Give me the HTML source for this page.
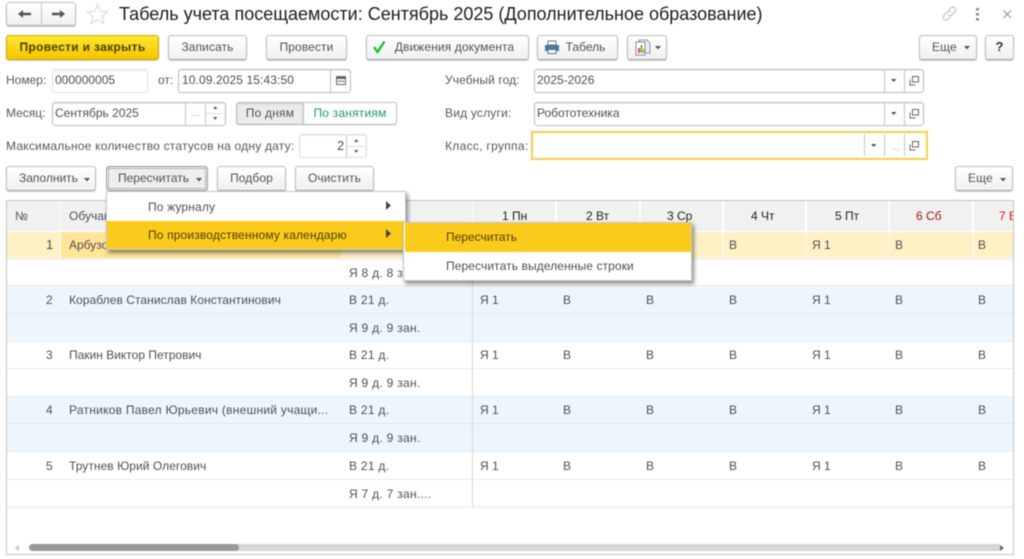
<!DOCTYPE html>
<html lang="ru"><head><meta charset="utf-8"><title>Табель</title>
<style>
html,body{margin:0;padding:0;background:#fff}
#p{position:relative;width:1024px;height:559px;overflow:hidden;background:#fff;font:12px "Liberation Sans",sans-serif;color:#4f4f4f;filter:blur(.4px)}
#p div,#p span.t,#p svg{position:absolute}
.t{white-space:nowrap;line-height:14px}
.b{box-sizing:border-box;height:25px;border:1px solid #bcbcbc;border-bottom-color:#a8a8a8;border-radius:3px;background:linear-gradient(#fff,#f0f0f0);box-shadow:0 1px 1px #ccc;text-align:center;line-height:22px;color:#525252;letter-spacing:.1px}
.i{box-sizing:border-box;height:24px;border:1px solid #c4c4c4;border-radius:3px;background:#fff;box-shadow:inset 0 1px 1px #eee}
.v{width:1px;background:#c4c4c4}
.l{color:#585858}
.s{letter-spacing:.28px}
</style></head><body><div id="p">

<!-- nav -->
<div class="b" style="left:6px;top:2px;width:70px;height:24px"></div>
<div class="v" style="left:41px;top:3px;height:21px"></div>
<svg style="left:17px;top:8px" width="15" height="12"><path d="M1 6L6 2V4.700H14V7.300H6V10Z" fill="#555"/></svg>
<svg style="left:51px;top:8px" width="15" height="12"><path d="M14 6L9 2V4.700H1V7.300H9V10Z" fill="#555"/></svg>
<svg style="left:86px;top:3px" width="23" height="22"><path d="M11.500 1.500L14.300 8.300L21.500 8.800L16 13.500L17.800 20.500L11.500 16.700L5.200 20.500L7 13.500L1.500 8.800L8.700 8.300Z" fill="#fff" stroke="#dcdcdc" stroke-width="1.200"/></svg>
<span class="t" style="left:119px;top:4px;font-size:18px;line-height:21px;color:#1c1c1c">Табель учета посещаемости: Сентябрь 2025 (Дополнительное образование)</span>
<svg style="left:941px;top:5px" width="17" height="17"><path d="M7.500 5L10 2.500Q12 1 14 2.800Q15.500 5 14 6.800L10.500 10.300Q8.500 11.500 7 10M9.500 12L7 14.500Q5 16 3 14.200Q1.500 12 3 10.200L6.500 6.700Q8.500 5.500 10 7" fill="none" stroke="#b8b8b8" stroke-width="1"/></svg>
<svg style="left:975px;top:6px" width="6" height="16"><path d="M1 2h3v2.500H1zM1 7h3v2.500H1zM1 12h3v2.500H1z" fill="#8a8a8a"/></svg>
<svg style="left:1002px;top:9px" width="11" height="11"><path d="M1.500 1.500L9 9M9 1.500L1.500 9" stroke="#999" stroke-width="1.200" fill="none"/></svg>

<!-- command bar -->
<div class="b" style="left:6px;top:35px;width:153px;border-color:#c8a800;background:linear-gradient(#ffe92e,#f5c400);color:#4a3f00;font-weight:bold;font-size:12px;letter-spacing:.32px">Провести и закрыть</div>
<div class="b" style="left:168px;top:35px;width:79px">Записать</div>
<div class="b" style="left:266px;top:35px;width:81px">Провести</div>
<div class="b" style="left:366px;top:35px;width:163px;padding-left:14px">Движения документа</div>
<svg style="left:372px;top:40px" width="15" height="14"><path d="M2 7L5.500 12L12.500 1.500" fill="none" stroke="#0fbf2f" stroke-width="2.200"/></svg>
<div class="b" style="left:537px;top:35px;width:81px;padding-left:16px;letter-spacing:0">Табель</div>
<svg style="left:544px;top:40px" width="16" height="15"><path d="M4 1h8v4H4z" fill="#fff" stroke="#5a7fa0"/><path d="M1 5h14v6h-2.500v3h-9v-3H1z" fill="#4e7696"/><path d="M4.500 10h7v3h-7z" fill="#fff"/></svg>
<div class="b" style="left:627px;top:35px;width:40px"></div>
<svg style="left:634px;top:39px" width="19" height="17"><path d="M5 1h8l3 3v10H5z" fill="#eee" stroke="#8a9aa5"/><path d="M2 3h9v13H2z" fill="#fff" stroke="#7f8f9a"/><path d="M4 9h2v5H4z" fill="#d9534f"/><path d="M6.500 6h2v8h-2z" fill="#7cb342"/><path d="M9 10h1.500v4H9z" fill="#e0a030"/></svg>
<svg style="left:655px;top:46px" width="7" height="4"><path d="M0 0h6L3 3.500z" fill="#555"/></svg>
<div class="b" style="left:919px;top:35px;width:58px;text-align:left;padding-left:12px">Еще</div>
<svg style="left:964px;top:46px" width="7" height="4"><path d="M0 0h6L3 3.500z" fill="#555"/></svg>
<div class="b" style="left:985px;top:35px;width:29px;font-weight:bold;color:#333;font-size:13px">?</div>

<!-- row 1 -->
<span class="t l" style="left:6px;top:73px">Номер:</span>
<div class="i" style="left:52px;top:69px;width:96px;border-color:#e0e0e0"></div>
<span class="t" style="left:55px;top:73px">000000005</span>
<span class="t l" style="left:158px;top:73px">от:</span>
<div class="i" style="left:178px;top:69px;width:173px;border-color:#bbb"></div>
<span class="t" style="left:182px;top:73px;letter-spacing:.1px">10.09.2025 15:43:50</span>
<div class="v" style="left:330px;top:70px;height:22px"></div>
<svg style="left:335px;top:74px" width="12" height="12"><path d="M1.500 2.500h9v8h-9z" fill="#fff" stroke="#666"/><path d="M1.500 2.500h9v2.500h-9zM3 6.500h1.500V8H3zM5.300 6.500h1.500V8H5.300zM7.600 6.500h1.500V8H7.600z" fill="#666"/></svg>

<span class="t l" style="left:445px;top:73px;letter-spacing:.1px">Учебный год:</span>
<div class="i" style="left:534px;top:69px;width:390px;border-color:#bbb"></div>
<span class="t" style="left:537px;top:73px">2025-2026</span>
<div class="v" style="left:884px;top:70px;height:22px"></div>
<div class="v" style="left:904px;top:70px;height:22px"></div>
<svg style="left:891px;top:79px" width="6" height="4"><path d="M0 0h5.500L2.700 3z" fill="#555"/></svg>
<svg style="left:909px;top:75px" width="11" height="11"><path d="M3.500 1.500h6v5.500h-6z" fill="#fff" stroke="#666"/><path d="M1 4.500v5.500h5.500" fill="none" stroke="#666"/></svg>

<!-- row 2 -->
<span class="t l" style="left:6px;top:106px">Месяц:</span>
<div class="i" style="left:52px;top:102px;width:174px;border-color:#bbb"></div>
<span class="t" style="left:55px;top:106px">Сентябрь 2025</span>
<div class="v" style="left:185px;top:103px;height:22px"></div>
<div class="v" style="left:205px;top:103px;height:22px"></div>
<div style="left:206px;top:113px;width:19px;height:1px;background:#ddd"></div>
<span class="t" style="left:191px;top:106px;color:#aaa;font-size:11px">...</span>
<svg style="left:213px;top:106px" width="5" height="4"><path d="M0 3h4.500L2.200 0z" fill="#666"/></svg>
<svg style="left:213px;top:117px" width="5" height="4"><path d="M0 0h4.500L2.200 3z" fill="#666"/></svg>
<div class="b" style="left:236px;top:102px;width:68px;height:23px;background:#ececec;line-height:21px;border-radius:3px 0 0 3px;box-shadow:inset 0 1px 2px #ccc;letter-spacing:.2px">По дням</div>
<div class="b" style="left:303px;top:102px;width:94px;height:23px;background:#fff;line-height:21px;color:#1f9a5a;border-radius:0 3px 3px 0;box-shadow:none;letter-spacing:.2px">По занятиям</div>

<span class="t l" style="left:445px;top:106px;letter-spacing:.2px">Вид услуги:</span>
<div class="i" style="left:534px;top:102px;width:390px;border-color:#bbb"></div>
<span class="t" style="left:537px;top:106px">Робототехника</span>
<div class="v" style="left:884px;top:103px;height:22px"></div>
<div class="v" style="left:904px;top:103px;height:22px"></div>
<svg style="left:891px;top:112px" width="6" height="4"><path d="M0 0h5.500L2.700 3z" fill="#555"/></svg>
<svg style="left:909px;top:108px" width="11" height="11"><path d="M3.500 1.500h6v5.500h-6z" fill="#fff" stroke="#666"/><path d="M1 4.500v5.500h5.500" fill="none" stroke="#666"/></svg>

<!-- row 3 -->
<span class="t l" style="left:6px;top:139px;letter-spacing:.21px">Максимальное количество статусов на одну дату:</span>
<div class="i" style="left:299px;top:134px;width:68px;border-color:#ddd"></div>
<span class="t" style="left:337px;top:139px;font-size:13px">2</span>
<div class="v" style="left:346px;top:135px;height:22px"></div>
<div style="left:347px;top:146px;width:19px;height:1px;background:#ddd"></div>
<svg style="left:354px;top:139px" width="5" height="4"><path d="M0 3h4.500L2.200 0z" fill="#666"/></svg>
<svg style="left:354px;top:150px" width="5" height="4"><path d="M0 0h4.500L2.200 3z" fill="#666"/></svg>

<span class="t l" style="left:445px;top:139px;letter-spacing:.3px">Класс, группа:</span>
<div style="box-sizing:border-box;left:531px;top:131px;width:397px;height:29px;border:2px solid #f7cd4a;background:#fff"></div>
<div class="v" style="left:864px;top:134px;height:22px"></div>
<div class="v" style="left:884px;top:134px;height:22px"></div>
<div class="v" style="left:904px;top:134px;height:22px"></div>
<svg style="left:871px;top:144px" width="6" height="4"><path d="M0 0h5.500L2.700 3z" fill="#555"/></svg>
<span class="t" style="left:891px;top:140px;color:#aaa;font-size:11px">...</span>
<svg style="left:909px;top:140px" width="11" height="11"><path d="M3.500 1.500h6v5.500h-6z" fill="#fff" stroke="#666"/><path d="M1 4.500v5.500h5.500" fill="none" stroke="#666"/></svg>

<!-- table command bar -->
<div class="b" style="left:6px;top:166px;width:90px;text-align:left;padding-left:12px;letter-spacing:0">Заполнить</div>
<svg style="left:84px;top:178px" width="7" height="4"><path d="M0 0h6L3 3.500z" fill="#555"/></svg>
<div class="b" style="left:106px;top:166px;width:102px;text-align:left;padding-left:11px;background:#eee;border-color:#999;box-shadow:none;letter-spacing:0">Пересчитать</div>
<div style="box-sizing:border-box;left:108px;top:168px;width:98px;height:21px;border:1px dotted #777"></div>
<svg style="left:196px;top:178px" width="7" height="4"><path d="M0 0h6L3 3.500z" fill="#555"/></svg>
<div class="b" style="left:217px;top:166px;width:69px">Подбор</div>
<div class="b" style="left:295px;top:166px;width:79px">Очистить</div>
<div class="b" style="left:955px;top:166px;width:58px;text-align:left;padding-left:12px">Еще</div>
<svg style="left:1000px;top:178px" width="7" height="4"><path d="M0 0h6L3 3.500z" fill="#555"/></svg>

<!-- table frame -->
<div style="box-sizing:border-box;left:6px;top:200px;width:1008px;height:355px;border:1px solid #c4c4c4;background:#fff"></div>
<div style="left:7px;top:201px;width:1006px;height:30px;background:#f1f1f1"></div>
<div style="left:60px;top:201px;width:1px;height:30px;background:#fff"></div>
<div style="left:472px;top:201px;width:1px;height:30px;background:#fff"></div>
<div style="left:555px;top:201px;width:2px;height:30px;background:#fff"></div>
<div style="left:639px;top:201px;width:2px;height:30px;background:#fff"></div>
<div style="left:722px;top:201px;width:2px;height:30px;background:#fff"></div>
<div style="left:805px;top:201px;width:2px;height:30px;background:#fff"></div>
<div style="left:888px;top:201px;width:2px;height:30px;background:#fff"></div>
<div style="left:972px;top:201px;width:2px;height:30px;background:#fff"></div>
<span class="t" style="left:15px;top:209px">№</span>
<span class="t" style="left:69px;top:209px">Обучающийся</span>
<span class="t" style="left:502px;top:209px;color:#222">1 Пн</span>
<span class="t" style="left:586px;top:209px;color:#222">2 Вт</span>
<span class="t" style="left:667px;top:209px;color:#222">3 Ср</span>
<span class="t" style="left:751px;top:209px;color:#222">4 Чт</span>
<span class="t" style="left:835px;top:209px;color:#222">5 Пт</span>
<span class="t" style="left:916px;top:209px;color:#a01818">6 Сб</span>
<span class="t" style="left:999px;top:209px;color:#e01010">7 Вс</span>
<div style="left:1013px;top:200px;width:11px;height:32px;background:#fff"></div>
<div style="left:1013px;top:200px;width:1px;height:355px;background:#c4c4c4"></div>

<!-- row backgrounds -->
<div style="left:7px;top:232px;width:1006px;height:26px;background:#fff1c6"></div>
<div style="left:61px;top:232px;width:280px;height:26px;background:#ffe49a"></div>
<div style="left:60px;top:232px;width:1px;height:26px;background:#fff"></div>
<div style="left:7px;top:258px;width:1006px;height:2px;background:#f2f2f2"></div>
<div style="left:7px;top:286px;width:1006px;height:55px;background:#edf6fd"></div>
<div style="left:7px;top:396px;width:1006px;height:55px;background:#edf6fd"></div>
<div style="left:7px;top:285px;width:1006px;height:1px;background:#e4ebf0"></div>
<div style="left:7px;top:313px;width:1006px;height:1px;background:#e2e8ec"></div>
<div style="left:7px;top:341px;width:1006px;height:1px;background:#e6ebef"></div>
<div style="left:7px;top:368px;width:1006px;height:1px;background:#e8e8e8"></div>
<div style="left:7px;top:396px;width:1006px;height:1px;background:#e4ebf0"></div>
<div style="left:7px;top:423px;width:1006px;height:1px;background:#e2e8ec"></div>
<div style="left:7px;top:451px;width:1006px;height:1px;background:#e4ebf0"></div>
<div style="left:7px;top:479px;width:1006px;height:1px;background:#e8e8e8"></div>
<div style="left:7px;top:506px;width:1006px;height:2px;background:#f0f0f0"></div>
<div style="left:472px;top:258px;width:1px;height:249px;background:#d8d8d8"></div>
<div style="left:555px;top:232px;width:2px;height:26px;background:#fff7dd"></div>
<div style="left:639px;top:232px;width:2px;height:26px;background:#fff7dd"></div>
<div style="left:722px;top:232px;width:2px;height:26px;background:#fff7dd"></div>
<div style="left:805px;top:232px;width:2px;height:26px;background:#fff7dd"></div>
<div style="left:888px;top:232px;width:2px;height:26px;background:#fff7dd"></div>
<div style="left:972px;top:232px;width:2px;height:26px;background:#fff7dd"></div>

<!-- row text -->
<span class="t" style="left:46px;top:238px;font-size:13px">1</span>
<span class="t" style="left:69px;top:238px">Арбузов</span>
<span class="t s" style="left:349px;top:266px">Я 8 д. 8 зан.</span>
<span class="t" style="left:729px;top:238px">В</span><span class="t" style="left:812px;top:238px">Я 1</span><span class="t" style="left:895px;top:238px">В</span><span class="t" style="left:978px;top:238px">В</span>

<span class="t" style="left:46px;top:293px">2</span>
<span class="t" style="left:69px;top:293px;letter-spacing:.06px">Кораблев Станислав Константинович</span>
<span class="t s" style="left:349px;top:293px">В 21 д.</span>
<span class="t s" style="left:349px;top:321px">Я 9 д. 9 зан.</span>
<span class="t" style="left:480px;top:293px">Я 1</span><span class="t" style="left:563px;top:293px">В</span><span class="t" style="left:646px;top:293px">В</span><span class="t" style="left:729px;top:293px">В</span><span class="t" style="left:812px;top:293px">Я 1</span><span class="t" style="left:895px;top:293px">В</span><span class="t" style="left:978px;top:293px">В</span>

<span class="t" style="left:46px;top:348px">3</span>
<span class="t" style="left:69px;top:348px">Пакин Виктор Петрович</span>
<span class="t s" style="left:349px;top:348px">В 21 д.</span>
<span class="t s" style="left:349px;top:376px">Я 9 д. 9 зан.</span>
<span class="t" style="left:480px;top:348px">Я 1</span><span class="t" style="left:563px;top:348px">В</span><span class="t" style="left:646px;top:348px">В</span><span class="t" style="left:729px;top:348px">В</span><span class="t" style="left:812px;top:348px">Я 1</span><span class="t" style="left:895px;top:348px">В</span><span class="t" style="left:978px;top:348px">В</span>

<span class="t" style="left:46px;top:403px">4</span>
<span class="t" style="left:69px;top:403px;letter-spacing:.25px">Ратников Павел Юрьевич (внешний учащи...</span>
<span class="t s" style="left:349px;top:403px">В 21 д.</span>
<span class="t s" style="left:349px;top:431px">Я 9 д. 9 зан.</span>
<span class="t" style="left:480px;top:403px">Я 1</span><span class="t" style="left:563px;top:403px">В</span><span class="t" style="left:646px;top:403px">В</span><span class="t" style="left:729px;top:403px">В</span><span class="t" style="left:812px;top:403px">Я 1</span><span class="t" style="left:895px;top:403px">В</span><span class="t" style="left:978px;top:403px">В</span>

<span class="t" style="left:46px;top:459px">5</span>
<span class="t" style="left:69px;top:459px;letter-spacing:.05px">Трутнев Юрий Олегович</span>
<span class="t s" style="left:349px;top:459px">В 21 д.</span>
<span class="t s" style="left:349px;top:487px">Я 7 д. 7 зан....</span>
<span class="t" style="left:480px;top:459px">Я 1</span><span class="t" style="left:563px;top:459px">В</span><span class="t" style="left:646px;top:459px">В</span><span class="t" style="left:729px;top:459px">В</span><span class="t" style="left:812px;top:459px">Я 1</span><span class="t" style="left:895px;top:459px">В</span><span class="t" style="left:978px;top:459px">В</span>

<!-- scrollbar -->
<div style="left:29px;top:544px;width:972px;height:7px;border-radius:4px;background:#d6d6d6"></div>
<div style="left:29px;top:544px;width:210px;height:7px;border-radius:4px;background:#999"></div>
<svg style="left:15px;top:545px" width="5" height="6"><path d="M4 0v6L0 3z" fill="#c4c4c4"/></svg>
<svg style="left:1000px;top:545px" width="5" height="6"><path d="M0 0v6L4 3z" fill="#666"/></svg>

<!-- menu 1 -->
<div style="box-sizing:border-box;left:106px;top:191px;width:300px;height:59px;background:#fff;border:1px solid #c8c8c8;box-shadow:2px 3px 4px rgba(0,0,0,.45)"></div>
<div style="left:107px;top:221px;width:298px;height:28px;background:#fbcb1c"></div>
<span class="t" style="left:148px;top:200px;letter-spacing:.15px">По журналу</span>
<span class="t" style="left:148px;top:228px;letter-spacing:.15px;color:#4a3f10">По производственному календарю</span>
<svg style="left:386px;top:201px" width="6" height="10"><path d="M0 0v9L5 4.500z" fill="#444"/></svg>
<svg style="left:386px;top:229px" width="6" height="10"><path d="M0 0v9L5 4.500z" fill="#444"/></svg>

<!-- menu 2 -->
<div style="box-sizing:border-box;left:403px;top:222px;width:289px;height:59px;background:#fff;border:1px solid #c8c8c8;box-shadow:2px 3px 4px rgba(0,0,0,.45)"></div>
<div style="left:405px;top:223px;width:286px;height:29px;background:#fbcb1c"></div>
<span class="t" style="left:446px;top:230px;color:#4a3f10">Пересчитать</span>
<span class="t" style="left:446px;top:259px;letter-spacing:.1px">Пересчитать выделенные строки</span>
</div></body></html>
